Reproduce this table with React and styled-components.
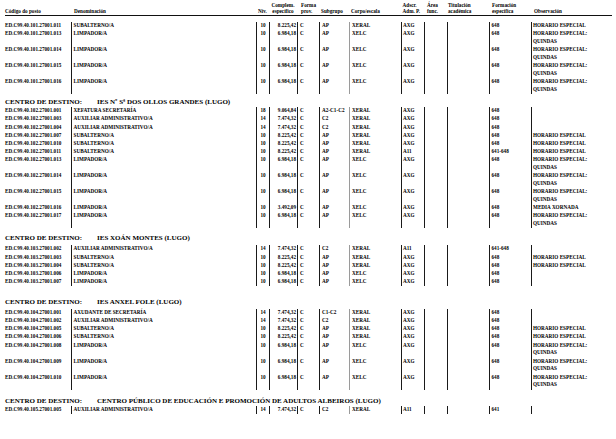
import React from 'react';
import styled, { createGlobalStyle } from 'styled-components';

const GlobalStyle = createGlobalStyle`
  html, body {
    margin: 0;
    background: #fff;
  }
  body {
    font-family: "Liberation Serif", "Times New Roman", "DejaVu Serif", serif;
    color: #000;
  }
`;

const COLS = '66px 185px 13px 28px 22px 30px 52px 23px 23px 42px 42px 81px';

// per column: border on the left, alignment, padding
const CELL = [
  { line: null, pl: 0 },
  { line: 'dark', pl: 1.5 },
  { line: 'dark', align: 'center' },
  { line: 'dark', align: 'right', pr: 1 },
  { line: 'dark', pl: 2 },
  { line: 'dark', pl: 2 },
  { line: 'grey', pl: 2 },
  { line: 'dark', pl: 1 },
  { line: 'dark' },
  { line: 'dark' },
  { line: 'dark', pl: 1.5 },
  { line: 'dark', pl: 1 },
];

const HE = 'HORARIO ESPECIAL';
const HEQ = 'HORARIO ESPECIAL:\nQUINDAS';

const sub = (code, obs) => [code, 'SUBALTERNO/A', '10', '8.225,42', 'C', 'AP', 'XERAL', 'AXG', '', '', '648', obs];
const limp = (code, obs, amount = '6.984,18') => [code, 'LIMPADOR/A', '10', amount, 'C', 'AP', 'XELC', 'AXG', '', '', '648', obs];
const aux = (code, adscr = 'AXG', form = '648') => [code, 'AUXILIAR ADMINISTRATIVO/A', '14', '7.474,32', 'C', 'C2', 'XERAL', adscr, '', '', form, ''];

const BLOCKS = [
  {
    rows: [
      sub('ED.C99.40.101.27001.011', HE),
      limp('ED.C99.40.101.27001.013', HEQ),
      limp('ED.C99.40.101.27001.014', HEQ),
      limp('ED.C99.40.101.27001.015', HEQ),
      limp('ED.C99.40.101.27001.016', HEQ),
    ],
  },
  {
    title: 'IES Nº Sª DOS OLLOS GRANDES (LUGO)',
    top: 4,
    bottom: 0,
    rows: [
      ['ED.C99.40.102.27001.001', 'XEFATURA SECRETARÍA', '18', '9.064,84', 'C', 'A2-C1-C2', 'XERAL', 'AXG', '', '', '648', ''],
      aux('ED.C99.40.102.27001.003'),
      aux('ED.C99.40.102.27001.004'),
      sub('ED.C99.40.102.27001.007', HE),
      sub('ED.C99.40.102.27001.010', HE),
      ['ED.C99.40.102.27001.011', 'SUBALTERNO/A', '10', '8.225,42', 'C', 'AP', 'XERAL', 'A11', '', '', '641-648', HE],
      limp('ED.C99.40.102.27001.013', HEQ),
      limp('ED.C99.40.102.27001.014', HEQ),
      limp('ED.C99.40.102.27001.015', HEQ),
      limp('ED.C99.40.102.27001.016', 'MEDIA XORNADA', '3.492,09'),
      limp('ED.C99.40.102.27001.017', HEQ),
    ],
  },
  {
    title: 'IES XOÁN MONTES (LUGO)',
    top: 6,
    bottom: 2,
    rows: [
      aux('ED.C99.40.103.27001.002', 'A11', '641-648'),
      sub('ED.C99.40.103.27001.003', HE),
      sub('ED.C99.40.103.27001.004', HE),
      limp('ED.C99.40.103.27001.006', ''),
      limp('ED.C99.40.103.27001.007', ''),
    ],
  },
  {
    title: 'IES ANXEL FOLE (LUGO)',
    top: 12,
    bottom: 1.5,
    rows: [
      ['ED.C99.40.104.27001.001', 'AXUDANTE DE SECRETARÍA', '14', '7.474,32', 'C', 'C1-C2', 'XERAL', 'AXG', '', '', '648', ''],
      aux('ED.C99.40.104.27001.002'),
      sub('ED.C99.40.104.27001.005', HE),
      sub('ED.C99.40.104.27001.006', HE),
      limp('ED.C99.40.104.27001.008', HEQ),
      limp('ED.C99.40.104.27001.009', HEQ),
      limp('ED.C99.40.104.27001.010', HEQ),
    ],
  },
  {
    title: 'CENTRO PÚBLICO DE EDUCACIÓN E PROMOCIÓN DE ADULTOS ALBEIROS (LUGO)',
    top: 7,
    bottom: 0,
    rows: [aux('ED.C99.40.105.27001.005', 'A11', '641')],
  },
];

const HEAD = [
  { lines: ['Código do posto'], pl: 0 },
  { lines: ['Denominación'], pl: 3 },
  { lines: ['Nív.'], pl: 2 },
  { lines: ['Complem.', 'específico'], align: 'center' },
  { lines: ['Forma', 'prov.'], pl: 4 },
  { lines: ['Subgrupo'], pl: 2 },
  { lines: ['Corpo/escala'], pl: 2 },
  { lines: ['Adscr.', 'Adm. P.'], pl: 1.5 },
  { lines: ['Área', 'func.'], pl: 3 },
  { lines: ['Titulación', 'académica'], pl: 1 },
  { lines: ['Formación', 'específica'], pl: 3 },
  { lines: ['Observación'], pl: 3 },
];

const App = () => {
  return (
    <>
      <GlobalStyle />
      <Page>
        <Header>
          {HEAD.map((h, i) => (
            <HeadCell key={i} $align={h.align} $pl={h.pl}>
              {h.lines.map(l => (
                <span key={l}>{l}</span>
              ))}
            </HeadCell>
          ))}
        </Header>
        {BLOCKS.map((block, b) => (
          <Block key={b}>
            {block.title && (
              <Title $top={block.top} $bottom={block.bottom}>
                <TitleLabel>CENTRO DE DESTINO:</TitleLabel>
                {block.title}
              </Title>
            )}
            {block.rows.map(row => (
              <Row key={row[0]}>
                {row.map((value, i) => (
                  <Cell
                    key={i}
                    $line={CELL[i].line}
                    $align={CELL[i].align}
                    $pl={CELL[i].pl}
                    $pr={CELL[i].pr}
                  >
                    {value}
                  </Cell>
                ))}
              </Row>
            ))}
          </Block>
        ))}
      </Page>
    </>
  );
};

const Page = styled.div`
  width: 607px;
  padding: 0 0 0 5px;
  font-family: "Liberation Serif", "Times New Roman", "DejaVu Serif", serif;
  font-weight: 700;
`;

const Header = styled.div`
  display: grid;
  grid-template-columns: ${COLS};
  padding: 2px 0 1px;
  border-bottom: 1px solid #111;
  font-size: 5.2px;
  line-height: 6px;
`;

const HeadCell = styled.div`
  display: flex;
  flex-direction: column;
  justify-content: flex-end;
  height: 12px;
  padding-left: ${p => p.$pl || 0}px;
  text-align: ${p => p.$align || 'left'};
  white-space: nowrap;

  span {
    display: block;
  }
`;

const Block = styled.section`
  &:first-of-type {
    margin-top: 6px;
  }
`;

const Title = styled.h2`
  margin: ${p => p.$top}px 0 ${p => p.$bottom}px;
  font-size: 7px;
  line-height: 9px;
  font-weight: 700;
  white-space: nowrap;
`;

const TitleLabel = styled.span`
  display: inline-block;
  width: 92px;
`;

const Row = styled.div`
  display: grid;
  grid-template-columns: ${COLS};
  font-size: 5.2px;
`;

const Cell = styled.div`
  box-sizing: border-box;
  min-height: 8.2px;
  padding: 0 ${p => p.$pr || 0}px 0.4px ${p => p.$pl || 0}px;
  border-left: ${p =>
    p.$line === 'dark' ? '1px solid #1a1a1a' : p.$line === 'grey' ? '1px solid #9a9a9a' : '0'};
  line-height: 7.8px;
  text-align: ${p => p.$align || 'left'};
  white-space: pre-line;
`;

export default App;
